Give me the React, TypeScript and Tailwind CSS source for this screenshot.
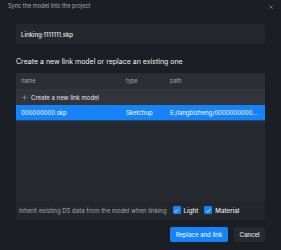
import { X, Plus } from "lucide-react";

const rows = [{ name: "000000000.skp", type: "Sketchup", path: "E:/langbizheng/0000000000..." }];

function Check({ label }: { label: string }) {
  return (
    <label className="flex items-center gap-[3px]">
      <span className="flex h-[8px] w-[8px] items-center justify-center rounded-[1px] bg-[#1683f8]">
        <svg viewBox="0 0 8 8" className="h-[7px] w-[7px]">
          <path d="M1.6 4.2 L3.3 5.8 L6.4 2.3" fill="none" stroke="white" strokeWidth="0.9" />
        </svg>
      </span>
      <span className="text-[6.2px] font-medium text-[#e6e7ea]">{label}</span>
    </label>
  );
}

export default function App() {
  return (
    <div className="flex h-[250px] w-[281px] flex-col bg-[#1c1e25] font-['Inter',sans-serif]">
      <div className="flex h-[13px] items-center justify-between pl-[8px] pr-[7px]">
        <span className="text-[5.6px] text-[#a7aab0]">Sync the model into the project</span>
        <X className="h-[6px] w-[6px] text-[#a7aab0]" strokeWidth={2} />
      </div>

      <div className="flex flex-1 flex-col px-[16px]">
        <div className="mt-[11px] flex h-[20px] items-center rounded-[2px] bg-[#24272e] px-[5px]">
          <span className="text-[6px] font-medium text-[#e6e7ea]">Linking:1111111.skp</span>
        </div>

        <div className="mt-[13px] text-[7px] leading-[10px] text-[#f0f1f3]">
          Create a new link model or replace an existing one
        </div>

        <div className="mt-[6px] flex h-[147px] flex-col rounded-[2px] bg-[#262930]">
          <div className="grid h-[16px] grid-cols-[105px_44px_1fr] items-center bg-[#2b2e35] px-[5px] text-[5.5px] text-[#a7aab0]">
            <span>name</span>
            <span>type</span>
            <span>path</span>
          </div>
          <div className="flex h-[16px] items-center gap-[3px] bg-[#31343b] px-[5px] text-[6px] text-[#e6e7ea]">
            <Plus className="h-[7px] w-[7px] text-[#b5b8be]" strokeWidth={1.6} />
            Create a new link model
          </div>
          {rows.map((r) => (
            <div
              key={r.name}
              className="grid h-[16px] grid-cols-[105px_44px_1fr] items-center border-b border-[#1b4a78] bg-[#1683f8] px-[5px] text-[6px] text-white"
            >
              <span>{r.name}</span>
              <span>{r.type}</span>
              <span className="truncate">{r.path}</span>
            </div>
          ))}
          <div className="flex-1" />
          <div className="flex h-[19px] items-center gap-[6px] bg-[#23262d] px-[3px]">
            <span className="text-[6px] text-[#a7aab0]">Inherit existing DS data from the model when linking</span>
            <Check label="Light" />
            <Check label="Material" />
          </div>
        </div>

        <div className="mt-[7px] flex justify-end gap-[6px]">
          <button className="h-[15px] w-[58px] rounded-[2px] bg-[#1683f8] text-[6px] text-white">Replace and link</button>
          <button className="h-[15px] w-[31px] rounded-[2px] bg-[#262930] text-[6px] font-medium text-[#e6e7ea]">Cancel</button>
        </div>
      </div>
    </div>
  );
}
